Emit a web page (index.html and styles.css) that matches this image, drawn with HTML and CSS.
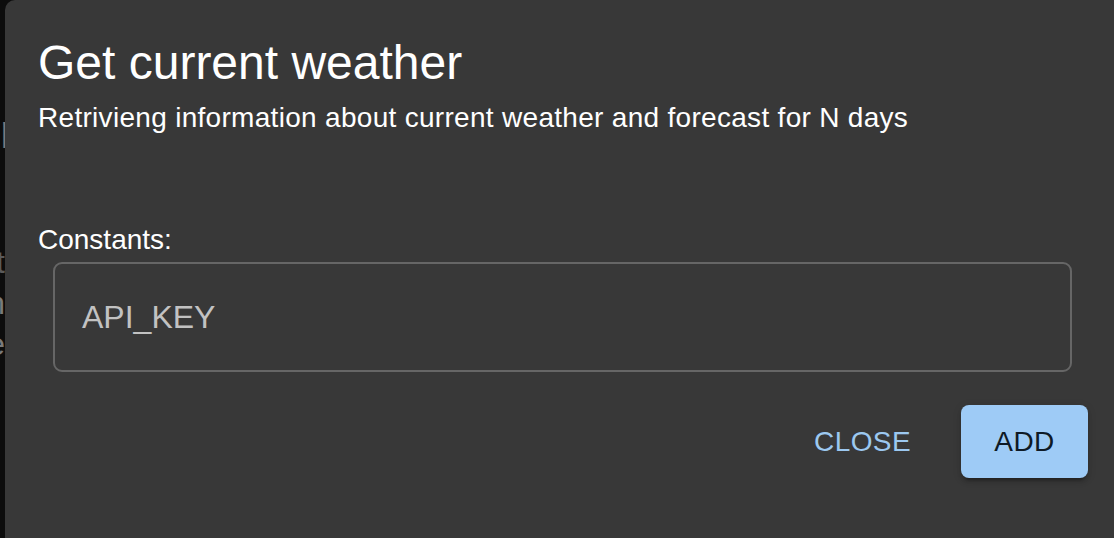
FILE: index.html
```html
<!DOCTYPE html>
<html lang="en">
<head>
<meta charset="utf-8">
<title>Get current weather</title>
<link rel="stylesheet" href="styles.css">
</head>
<body>
  <div class="backdrop" aria-hidden="true">
    <div class="backdrop-text">
      <div class="bg-heading">Order</div>
      <div class="bg-line bg-dim">Input</div>
      <div class="bg-line">Function</div>
      <div class="bg-line">Some value</div>
    </div>
  </div>
  <div class="dialog" role="dialog">
    <h2 class="title">Get current weather</h2>
    <p class="subtitle">Retrivieng information about current weather and forecast for N days</p>
    <div class="label">Constants:</div>
    <div class="field">
      <span class="field-text">API_KEY</span>
    </div>
    <div class="actions">
      <button class="btn btn-text">CLOSE</button>
      <button class="btn btn-contained">ADD</button>
    </div>
  </div>
</body>
</html>
```

FILE: styles.css
```css
html, body {
  margin: 0;
  padding: 0;
}

body {
  width: 1114px;
  height: 538px;
  overflow: hidden;
  display: flex;
  background: #0c0c0c;
  font-family: "Liberation Sans", Arial, Helvetica, sans-serif;
}

.backdrop {
  width: 5px;
  flex: 0 0 5px;
  overflow: hidden;
}

.backdrop-text {
  width: 300px;
  margin-left: -295px;
  text-align: right;
  color: #6e6e6e;
  padding-top: 104px;
}

.bg-heading {
  font-size: 48px;
  line-height: 56px;
  color: #7a7a7a;
  margin-right: -11px;
  margin-bottom: 82px;
}

.bg-line {
  font-size: 32px;
  line-height: 41px;
  color: #7a7a7a;
}

.bg-dim {
  color: #5a5a5a;
}

.dialog {
  flex: 1;
  height: 560px;
  background: #383838;
  border-radius: 10px 0 0 0;
  padding: 35px 26px 0 33px;
  display: flex;
  flex-direction: column;
  color: #ffffff;
  box-sizing: border-box;
}

.title {
  margin: 0;
  font-size: 48px;
  line-height: 56px;
  font-weight: 400;
}

.subtitle {
  margin: 11px 0 0 0;
  font-size: 28px;
  line-height: 32px;
  font-weight: 400;
  letter-spacing: 0.3px;
}

.label {
  margin-top: 90px;
  font-size: 28px;
  line-height: 32px;
}

.field {
  margin: 6px 16px 0 15px;
  height: 110px;
  border: 2px solid #666666;
  border-radius: 9px;
  box-sizing: border-box;
  display: flex;
  align-items: center;
  padding-left: 27px;
}

.field-text {
  font-size: 32px;
  color: #c2c2c2;
}

.actions {
  margin-top: 33px;
  display: flex;
  justify-content: flex-end;
  align-items: center;
  gap: 34px;
}

.btn {
  font-family: "Liberation Sans", Arial, Helvetica, sans-serif;
  font-size: 28px;
  height: 73px;
  border: none;
  border-radius: 8px;
  cursor: pointer;
  letter-spacing: 0.4px;
}

.btn-text {
  background: transparent;
  color: #9cc8f0;
  padding: 0 16px;
}

.btn-contained {
  width: 127px;
  background: #9ecbf6;
  color: #0e1a26;
  padding: 0;
  box-shadow: 0 6px 2px -4px rgba(0, 0, 0, 0.2), 0 4px 4px 0 rgba(0, 0, 0, 0.14), 0 2px 10px 0 rgba(0, 0, 0, 0.12);
}
```
